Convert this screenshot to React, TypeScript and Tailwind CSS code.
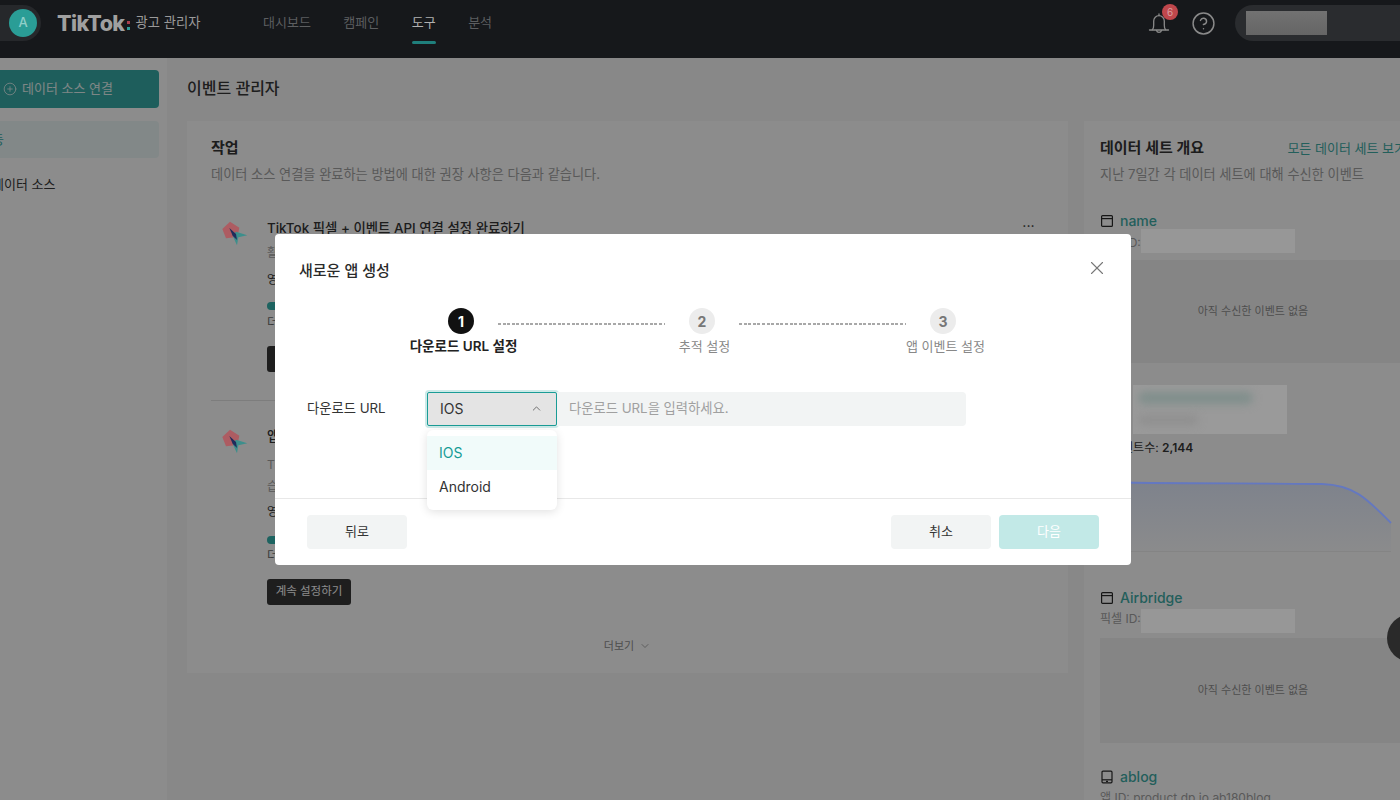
import { ChevronDown, ChevronUp, CircleHelp, CirclePlus, X } from 'lucide-react';

const Logo = () => (
  <svg className="relative z-20 mt-[3px] ml-[-45px] mr-[19px] shrink-0" width="26" height="26" viewBox="96 64 78 78">
    <polygon points="120,66 148,84 142,112 108,116 97,88" fill="#ad5c62" />
    <polygon points="138,96 172,107 145,113 141,137 128,108" fill="#3d8f8c" />
    <polygon points="118,85 138,103 141,121 128,108" fill="#1f2c5c" />
  </svg>
);

const BrowserIcon = () => (
  <svg width="14" height="14" viewBox="0 0 14 14" fill="none" stroke="#2a2a2a" strokeWidth="1.2" className="shrink-0">
    <rect x="1.6" y="1.6" width="10.8" height="10.8" rx="1" />
    <path d="M1.6 4.6h10.8" />
  </svg>
);

const TabletIcon = () => (
  <svg width="14" height="14" viewBox="0 0 14 14" fill="none" stroke="#2a2a2a" strokeWidth="1.2" className="shrink-0">
    <rect x="2" y="1.2" width="10" height="11.6" rx="1" />
    <path d="M2 9.8h10" />
    <path d="M6 11.3h2" />
  </svg>
);

const Hidden = ({ className }: { className: string }) => (
  <div className={`relative z-20 shrink-0 bg-[#979797] ${className}`} />
);

const EmptyBox = ({ height }: { height: string }) => (
  <div className={`flex w-[306px] items-center justify-center bg-[#f2f2f2] text-[11px] text-[#8f8f8f] ${height}`}>
    아직 수신한 이벤트 없음
  </div>
);

type TaskProps = {
  title: string;
  lines: string[];
  more: boolean;
  gaps: { lines: string; impact: string; bar: string; note: string; button: string };
};

const Task = ({ title, lines, more, gaps }: TaskProps) => (
  <div className="flex pl-[80px]">
    <Logo />
    <div className="min-w-0 flex-1">
      <div className="flex items-center justify-between pr-[33px]">
        <div className="text-[13.4px] leading-5 font-medium text-[#353535]">{title}</div>
        {more && <div className="mb-1 text-[11px] leading-3 font-bold tracking-[0.5px] text-[#353535]">···</div>}
      </div>
      <div className={`text-[12px] leading-[22px] text-[#a3a3a3] ${gaps.lines}`}>
        {lines.map((l) => (
          <div key={l}>{l}</div>
        ))}
      </div>
      <div className={`text-[12px] leading-[18px] text-[#383838] ${gaps.impact}`}>영향: 광고 성과 측정</div>
      <div className={`h-2 w-[400px] rounded-full bg-[#ececec] ${gaps.bar}`}>
        <div className="h-2 w-[60px] rounded-full bg-[#35b4af]" />
      </div>
      <div className={`text-[12px] leading-[18px] text-[#6a6a6a] ${gaps.note}`}>더 많은 단계를 완료하세요</div>
      <button className={`block h-[26px] w-[84px] rounded-[3px] bg-[#383838] text-[11.5px] text-white ${gaps.button}`}>
        계속 설정하기
      </button>
    </div>
  </div>
);

export default function App() {
  return (
    <div className="relative h-screen w-full overflow-hidden bg-[#f7f7f7] [font-family:Inter,'Noto_Sans_CJK_KR',sans-serif]">
      <header className="relative z-20 flex h-[58px] items-center bg-[#16181b] pb-3">
        <div className="-ml-[20px] flex h-9 w-[61px] shrink-0 items-center justify-end rounded-full bg-[#26282b] pr-1">
          <div className="flex h-7 w-7 items-center justify-center rounded-full bg-[#2a9d96] text-[13px] font-medium text-[#8fcfc9]">
            A
          </div>
        </div>
        <div className="ml-4 flex w-[206px] shrink-0 items-center">
          <span className="text-[21.5px] leading-6 font-extrabold tracking-[-0.6px] text-[#a0a0a0]">TikTok</span>
          <span className="mt-[5px] ml-[2px] flex flex-col gap-[3px]">
            <span className="h-[3px] w-[3px] bg-[#a83f4c]" />
            <span className="h-[3px] w-[3px] bg-[#2f9c97]" />
          </span>
          <span className="ml-[6px] text-[13.3px] text-[#9a9a9a]">광고 관리자</span>
        </div>
        <nav className="flex h-full gap-[32.5px] text-[13px]">
          <span className="flex items-center text-[#5c5e60]">대시보드</span>
          <span className="flex items-center text-[#5c5e60]">캠페인</span>
          <span className="relative flex items-center text-[#b0b0b0]">
            도구
            <span className="absolute inset-x-0 top-[41px] h-[3px] rounded-sm bg-[#1f7f7c]" />
          </span>
          <span className="flex items-center text-[#5c5e60]">분석</span>
        </nav>
        <div className="ml-auto flex items-center">
          <div className="relative mr-[20px]">
            <svg width="24" height="24" viewBox="0 0 24 24" fill="none" stroke="#8a8a8a" strokeWidth="1.3" strokeLinecap="round">
              <path d="M5.5 18.5c1-1.2 1.2-2.4 1.2-4.3V10a5.3 5.3 0 0 1 10.6 0v4.2c0 1.9.2 3.100 1.200 4.300" />
              <path d="M2.500 19h19" />
              <path d="M9.500 19.500a2.600 2.600 0 0 0 5 0" />
              <path d="M12 3v1.500" />
            </svg>
            <span className="absolute -top-[7px] left-[15px] flex h-4 w-4 items-center justify-center rounded-full bg-[#c0474c] text-[10px] text-[#d8a0a2]">
              6
            </span>
          </div>
          <CircleHelp size={25} strokeWidth={1.4} className="mr-[19px] text-[#8a8a8a]" />
          <div className="-mr-[30px] flex h-9 w-[195px] items-center rounded-full bg-[#2a2c2f] pl-[11px]">
            <div className="h-6 w-[81px] bg-gradient-to-b from-[#727272] to-[#656565]" />
          </div>
        </div>
      </header>

      <div className="flex h-[742px]">
        <aside className="-ml-[40px] w-[207px] shrink-0 bg-white px-2 pt-3">
          <button className="flex h-[38px] w-full items-center gap-[5px] rounded-[4px] bg-[#37aca8] pl-[35px] text-[13px] text-[#e6f5f4]">
            <CirclePlus size={14} strokeWidth={1.4} />
            데이터 소스 연결
          </button>
          <div className="mt-[13px] flex h-[37px] items-center rounded-[4px] bg-[#edf8f7] pl-[12px] text-[13px] text-[#37aca8]">
            활동
          </div>
          <div className="mt-2 flex h-[37px] items-center pl-[24px] text-[13px] text-[#383838]">데이터 소스</div>
        </aside>

        <main className="min-w-0 flex-1 pt-[18px] pl-5">
          <h1 className="text-base leading-6 font-medium text-[#383838]">이벤트 관리자</h1>
          <div className="mt-[21px] flex gap-4">
            <section className="h-[552px] w-[881px] shrink-0 bg-white pt-[17px]">
              <div className="px-6">
                <h2 className="text-[15px] leading-5 font-semibold text-[#353535]">작업</h2>
                <p className="mt-[6px] text-[13.2px] leading-5 text-[#a3a3a3]">
                  데이터 소스 연결을 완료하는 방법에 대한 권장 사항은 다음과 같습니다.
                </p>
              </div>
              <div className="mt-[34px]">
                <Task
                  title="TikTok 픽셀 + 이벤트 API 연결 설정 완료하기"
                  lines={['활성화를 완료하세요']}
                  more
                  gaps={{ lines: 'mt-1', impact: 'mt-[7px]', bar: 'mt-[13px]', note: 'mt-1', button: 'mt-[14px]' }}
                />
                <div className="mx-6 mt-[28px] mb-[25px] border-t border-[#e4e4e4]" />
                <Task
                  title="앱 이벤트 설정 완료하기"
                  lines={['TikTok 앱 이벤트 설정을 완료하세요', '습관적인 설정을 진행하세요']}
                  more={false}
                  gaps={{ lines: 'mt-2', impact: 'mt-[5px]', bar: 'mt-[15px]', note: 'mt-[3px]', button: 'mt-[14px]' }}
                />
              </div>
              <div className="mt-[33px] flex items-center justify-center gap-[5px] text-[11px] text-[#8f8f8f]">
                더보기
                <ChevronDown size={12} strokeWidth={1.5} />
              </div>
            </section>

            <section className="w-[338px] shrink-0 bg-white px-4 pt-[17px]">
              <div className="flex items-center justify-between">
                <h2 className="text-[15px] leading-5 font-semibold text-[#353535]">데이터 세트 개요</h2>
                <a className="text-[13px] leading-5 whitespace-nowrap text-[#3fada7]">모든 데이터 세트 보기</a>
              </div>
              <p className="mt-[6px] text-[13.2px] leading-5 text-[#a3a3a3]">지난 7일간 각 데이터 세트에 대해 수신한 이벤트</p>

              <div className="mt-[27px] flex items-center gap-[6px] text-[14px] leading-5 font-medium text-[#3fada7]">
                <BrowserIcon />
                name
              </div>
              <div className="mt-[2px] flex h-5 items-center text-[12px] text-[#a3a3a3]">
                픽셀 ID:
                <Hidden className="-top-[2px] h-6 w-[154px]" />
              </div>
              <EmptyBox height="mt-[7px] h-[103px]" />

              <div className="relative z-20 mt-[22px] ml-[33px] h-[49px] w-[154px] overflow-hidden bg-[#9a9a9a]">
                <div className="absolute top-[7px] left-[5px] h-[12px] w-[115px] rounded-full bg-[#7f8e8b] blur-[4px]" />
                <div className="absolute top-[30px] left-[5px] h-[10px] w-[60px] rounded-full bg-[#8f8f8f] blur-[4px]" />
              </div>
              <div className="mt-[5px] text-[12px] leading-[18px] text-[#383838]">
                총이벤트수: <b className="font-semibold">2,144</b>
              </div>
              <svg className="relative z-20 mt-[13px] block" width="292" height="82" viewBox="0 0 292 82" fill="none">
                <defs>
                  <linearGradient id="area" x1="0" y1="0" x2="0" y2="1">
                    <stop offset="0" stopColor="#5a6a8c" stopOpacity="0.28" />
                    <stop offset="1" stopColor="#5a6a8c" stopOpacity="0.03" />
                  </linearGradient>
                </defs>
                <path d="M0 12C60 14 160 13 222 14C255 15 268 30 291 53V81H0Z" fill="url(#area)" />
                <path d="M0 12C60 14 160 13 222 14C255 15 268 30 291 53" stroke="#6478c0" strokeWidth="1.8" />
                <path d="M0 81.500H291" stroke="#848484" />
              </svg>

              <div className="mt-[36px] flex items-center gap-[6px] text-[14px] leading-5 font-medium text-[#3fada7]">
                <BrowserIcon />
                Airbridge
              </div>
              <div className="mt-[1px] flex h-5 items-center text-[12px] text-[#a3a3a3]">
                픽셀 ID:
                <Hidden className="top-[2px] h-6 w-[154px]" />
              </div>
              <EmptyBox height="mt-[9px] h-[105px]" />

              <div className="mt-[24px] flex items-center gap-[6px] text-[14px] leading-5 font-medium text-[#3fada7]">
                <TabletIcon />
                ablog
              </div>
              <div className="mt-[1px] text-[12px] leading-5 text-[#a3a3a3]">앱 ID: product.dp.io.ab180blog</div>
            </section>
          </div>
        </main>
      </div>

      <div className="absolute top-[614px] -right-[35px] z-20 h-12 w-12 rounded-full bg-[#2a2a2a]" />

      <div className="absolute inset-0 z-10 bg-black/45" />

      <div className="absolute inset-0 z-30 flex items-center justify-center pb-px pl-[6px]">
        <div className="relative h-[331px] w-[856px] rounded-[4px] bg-white text-[#222]">
          <div className="flex h-[47px] items-end justify-between pr-[23px] pl-6">
            <h3 className="text-[15px] leading-5 font-medium text-[#2a2a2a]">새로운 앱 생성</h3>
            <X size={22} strokeWidth={1.2} className="mb-[2px] text-[#777]" />
          </div>

          <div className="mt-[27px] ml-[173px] flex">
            <span className="flex h-[26px] w-[26px] items-center justify-center rounded-full bg-[#111] text-[14px] font-bold text-white">1</span>
            <span className="mx-6 mt-[15px] h-[2px] w-[167px] bg-[repeating-linear-gradient(90deg,#a8a8a8_0_3px,transparent_3px_4.6px)]" />
            <span className="flex h-[26px] w-[26px] items-center justify-center rounded-full bg-[#ececec] text-[14px] font-bold text-[#777]">2</span>
            <span className="mx-6 mt-[15px] h-[2px] w-[167px] bg-[repeating-linear-gradient(90deg,#a8a8a8_0_3px,transparent_3px_4.6px)]" />
            <span className="flex h-[26px] w-[26px] items-center justify-center rounded-full bg-[#ececec] text-[14px] font-bold text-[#777]">3</span>
          </div>
          <div className="mt-[3px] ml-[68px] flex text-center text-[13px] leading-[18px]">
            <span className="w-[241px] text-[13.5px] font-semibold text-[#222]">다운로드 URL 설정</span>
            <span className="w-[241px] text-[#888]">추적 설정</span>
            <span className="w-[241px] text-[#888]">앱 이벤트 설정</span>
          </div>

          <div className="mt-[37px] flex items-center pl-8">
            <span className="w-[120px] text-[13.3px] text-[#333]">다운로드 URL</span>
            <div className="flex h-[34px] w-[130px] items-center justify-between rounded-[2px] border border-[#1a9c96] bg-[#e4e4e4] pr-[13px] pb-[2px] pl-3 text-[14px] text-[#333] ring-2 ring-[#cdeae8]">
              IOS
              <ChevronUp size={13} strokeWidth={1.5} className="text-[#555]" />
            </div>
            <div className="flex h-[34px] w-[409px] items-center rounded-r-[4px] bg-[#f2f4f4] pl-3 text-[13.3px] text-[#a0a0a0]">
              다운로드 URL을 입력하세요.
            </div>
          </div>

          <div className="absolute top-[196px] left-[152px] z-10 w-[130px] rounded-[6px] bg-white py-[6px] text-[14px] shadow-[0_2px_10px_rgba(0,0,0,0.12)]">
            <div className="flex h-[34px] items-center bg-[#f1fbfa] pb-[2px] pl-3 text-[#159c96]">IOS</div>
            <div className="flex h-[34px] items-center pb-[2px] pl-3 text-[#333]">Android</div>
          </div>

          <div className="absolute inset-x-0 bottom-0 flex h-[67px] items-center justify-between border-t border-[#e8e8e8] pr-8 pl-8 text-[13px]">
            <button className="h-[34px] w-[100px] rounded-[4px] bg-[#f2f4f4] text-[#333]">뒤로</button>
            <div className="flex gap-2">
              <button className="h-[34px] w-[100px] rounded-[4px] bg-[#f2f4f4] text-[#333]">취소</button>
              <button className="h-[34px] w-[100px] rounded-[4px] bg-[#c2e9e7] text-white">다음</button>
            </div>
          </div>
        </div>
      </div>
    </div>
  );
}
